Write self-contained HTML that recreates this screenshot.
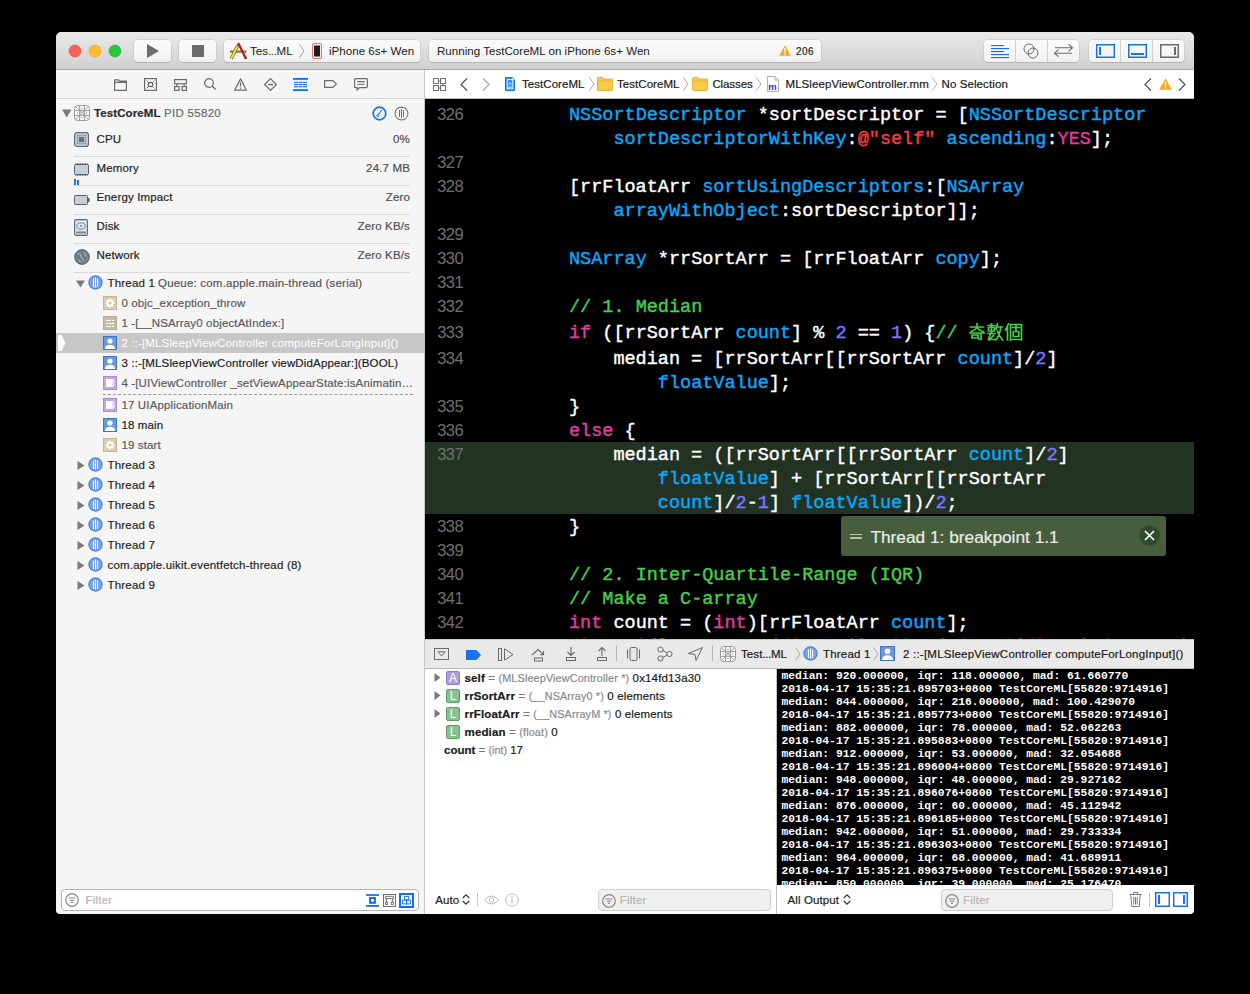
<!DOCTYPE html>
<html><head><meta charset="utf-8">
<style>
*{margin:0;padding:0;box-sizing:border-box}
html,body{width:1250px;height:994px;background:#000;overflow:hidden}
body{position:relative;font-family:"Liberation Sans",sans-serif;font-size:11.5px;color:#262626}
.a{position:absolute}
.t{position:absolute;white-space:pre;line-height:1;-webkit-text-stroke:0.2px currentColor}
.mono{font-family:"Liberation Mono",monospace}
svg{position:absolute;overflow:visible}
#win{position:absolute;left:56px;top:32px;width:1138px;height:882px;border-radius:5px;overflow:hidden;background:#f5f5f5}
#toolbar{left:56px;top:32px;width:1138px;height:38px;background:linear-gradient(#e9e9e9,#d0d0d0);border-bottom:1px solid #a7a7a7;border-radius:5px 5px 0 0}
.btn{position:absolute;height:22px;top:40px;background:linear-gradient(#fbfbfb,#f1f1f1);border-radius:4px;box-shadow:0 0 0 0.5px #c0c0c0,0 1px 0 #a9a9a9}
.code{position:absolute;font-family:"Liberation Mono",monospace;font-size:18.5px;color:#fff;-webkit-text-stroke:0.4px currentColor;white-space:pre;line-height:24px}
.ln{position:absolute;font-family:"Liberation Sans",sans-serif;font-size:16.5px;color:#6f6f6f;white-space:pre;line-height:1;letter-spacing:-0.6px}
.k{color:#e03ca4}.c{color:#06aaff}.s{color:#ff3b40}.n{color:#8174ff}.g{color:#45cf49}
.con{position:absolute;font-family:"Liberation Mono",monospace;font-weight:700;font-size:11.33px;color:#fff;white-space:pre;line-height:1}
</style></head><body>

<div id="clip" style="position:absolute;left:0;top:0;width:1250px;height:994px;clip-path:inset(32px 56px 80px 56px round 5px 5px 4px 4px)">
<div id="win"></div>
<div class="a" id="toolbar"></div>
<svg style="left:68px;top:44px" width="14" height="14" viewBox="0 0 14 14"><circle cx="7" cy="7" r="6" fill="#fe5f57" stroke="#e2463f" stroke-width="0.6"/></svg>
<svg style="left:88px;top:44px" width="14" height="14" viewBox="0 0 14 14"><circle cx="7" cy="7" r="6" fill="#febc2e" stroke="#e1a116" stroke-width="0.6"/></svg>
<svg style="left:108px;top:44px" width="14" height="14" viewBox="0 0 14 14"><circle cx="7" cy="7" r="6" fill="#28c840" stroke="#12ac28" stroke-width="0.6"/></svg>
<div class="btn" style="left:134px;width:37px"></div>
<svg style="left:146px;top:44px" width="14" height="14" viewBox="0 0 14 14"><path d="M1 0 L13 7 L1 14 Z" fill="#6b6b6b"/></svg>
<div class="btn" style="left:179px;width:37px"></div>
<svg style="left:192px;top:45px" width="12" height="12" viewBox="0 0 12 12"><rect x="0" y="0" width="12" height="12" fill="#6b6b6b"/></svg>
<div class="btn" style="left:224px;width:196px"></div>
<svg style="left:228px;top:42px" width="20" height="18" viewBox="0 0 20 18"><path d="M2 9.6 H18.5" stroke="#9a7448" stroke-width="2.4"/><path d="M3.2 16.8 L9.3 4.2" stroke="#6b5a2a" stroke-width="3.2"/><path d="M3.2 16.8 L9.3 4.2" stroke="#f2dc3c" stroke-width="2"/><path d="M9.3 4.2 L10.2 2.4" stroke="#e2506a" stroke-width="2.4"/><path d="M10.2 1 L18 16.8" stroke="#b01c2a" stroke-width="2.2"/><path d="M17 14.5 L18.2 17" stroke="#6a4a2a" stroke-width="2"/></svg>
<div class="t" style="left:250px;top:45.00px;font-size:11.6px;color:#1a1a1a;font-weight:400;letter-spacing:0px;-webkit-text-stroke:0">Tes<span style="letter-spacing:-0.4px">...</span>ML</div>
<svg style="left:299px;top:44px" width="6" height="14" viewBox="0 0 6 14"><path d="M0.5 0.5 L5 7 L0.5 13.5" stroke="#9a9a9a" stroke-width="0.9" fill="none"/></svg>
<svg style="left:312px;top:43px" width="10" height="16" viewBox="0 0 10 16"><rect x="0.5" y="0.5" width="9" height="15" rx="1.5" fill="#f6eeee" stroke="#d47a6a"/><rect x="2" y="2.5" width="6" height="11" fill="#1c1c1c"/></svg>
<div class="t" style="left:329px;top:45.00px;font-size:11.6px;color:#1a1a1a;font-weight:400;letter-spacing:0px;-webkit-text-stroke:0">iPhone 6s+ Wen</div>
<div class="btn" style="left:429px;width:392px"></div>
<div class="t" style="left:437px;top:45.00px;font-size:11.6px;color:#1a1a1a;font-weight:400;letter-spacing:0px;-webkit-text-stroke:0">Running TestCoreML on iPhone 6s+ Wen</div>
<svg style="left:779px;top:45px" width="12" height="11" viewBox="0 0 12 11"><path d="M6 0.3 L11.8 10.7 H0.2 Z" fill="#f5a623"/><rect x="5.3" y="3" width="1.4" height="4.6" fill="#fff"/><rect x="5.3" y="8.4" width="1.4" height="1.4" fill="#fff"/></svg>
<div class="t" style="left:796px;top:47.00px;font-size:10px;color:#2a2a2a;font-weight:400;letter-spacing:0.5px;">206</div>
<div class="btn" style="left:984px;width:95px"></div>
<div class="a" style="left:1015px;top:40px;width:1px;height:22px;background:#d0d0d0"></div>
<div class="a" style="left:1047px;top:40px;width:1px;height:22px;background:#d0d0d0"></div>
<svg style="left:991px;top:45px" width="18" height="14" viewBox="0 0 18 14"><rect x="0" y="0" width="13" height="1.1" fill="#0d6ef5"/><rect x="0" y="3" width="18" height="1.1" fill="#0d6ef5"/><rect x="0" y="6" width="13" height="1.1" fill="#0d6ef5"/><rect x="0" y="9" width="18" height="1.1" fill="#0d6ef5"/><rect x="0" y="12" width="18" height="1.1" fill="#0d6ef5"/></svg>
<svg style="left:1023px;top:43px" width="16" height="16" viewBox="0 0 16 16"><circle cx="6" cy="6" r="5" fill="none" stroke="#6b6b6b" stroke-width="1"/><circle cx="10" cy="10" r="5" fill="none" stroke="#6b6b6b" stroke-width="1"/></svg>
<svg style="left:1053px;top:43px" width="21" height="15" viewBox="0 0 21 15"><path d="M2 4.8 H19.5 M15.5 1.3 L19.5 4.8 L15.5 8.3 M19 10.2 H1.5 M5.5 6.7 L1.5 10.2 L5.5 13.7" stroke="#6b6b6b" stroke-width="1.1" fill="none"/></svg>
<div class="btn" style="left:1089px;width:95px"></div>
<div class="a" style="left:1120px;top:40px;width:1px;height:22px;background:#d0d0d0"></div>
<div class="a" style="left:1152px;top:40px;width:1px;height:22px;background:#d0d0d0"></div>
<svg style="left:1096px;top:44px" width="19" height="14" viewBox="0 0 19 14"><rect x="0.75" y="0.75" width="17.5" height="12.5" fill="none" stroke="#1a73e8" stroke-width="1.5"/><rect x="3" y="3" width="2" height="8" fill="#1a73e8"/></svg>
<svg style="left:1128px;top:44px" width="19" height="14" viewBox="0 0 19 14"><rect x="0.75" y="0.75" width="17.5" height="12.5" fill="none" stroke="#1a73e8" stroke-width="1.5"/><rect x="3" y="9" width="13" height="2" fill="#1a73e8"/></svg>
<svg style="left:1160px;top:44px" width="19" height="14" viewBox="0 0 19 14"><rect x="0.75" y="0.75" width="17.5" height="12.5" fill="none" stroke="#6b6b6b" stroke-width="1.5"/><rect x="14" y="3" width="2" height="8" fill="#6b6b6b"/></svg>
<div class="a" style="left:56px;top:70px;width:368px;height:844px;background:#f5f5f5"></div>
<div class="a" style="left:56px;top:98px;width:368px;height:1px;background:#d6d6d6"></div>
<div class="a" style="left:424px;top:70px;width:1px;height:844px;background:#c8c8c8"></div>
<svg style="left:114px;top:79px" width="13" height="12" viewBox="0 0 13 12"><path d="M0.6 11.4 V0.9 H4.6 L5.6 2.1 H12.4 V11.4 Z M0.6 3.4 H12.4" fill="none" stroke="#6b6b6b" stroke-width="1.2" stroke-linejoin="round"/></svg>
<svg style="left:144px;top:78px" width="13" height="13" viewBox="0 0 13 13"><rect x="0.6" y="0.6" width="11.8" height="11.8" fill="none" stroke="#6b6b6b" stroke-width="1.2"/><path d="M2.6 2.6 L10.4 10.4 M10.4 2.6 L2.6 10.4" stroke="#6b6b6b" stroke-width="0.9"/><circle cx="6.5" cy="6.5" r="2.2" fill="#f5f5f5" stroke="#6b6b6b" stroke-width="1.2"/></svg>
<svg style="left:174px;top:79px" width="13" height="12" viewBox="0 0 13 12"><rect x="0.6" y="0.6" width="11.8" height="4.2" fill="none" stroke="#6b6b6b" stroke-width="1.2"/><path d="M2.8 4.8 V7.4 M10.2 4.8 V7.4" stroke="#6b6b6b" stroke-width="1.2"/><rect x="0.6" y="7.6" width="4.4" height="3.8" fill="none" stroke="#6b6b6b" stroke-width="1.2"/><rect x="8" y="7.6" width="4.4" height="3.8" fill="none" stroke="#6b6b6b" stroke-width="1.2"/></svg>
<svg style="left:204px;top:78px" width="12" height="12" viewBox="0 0 12 12"><circle cx="5" cy="5" r="4.3" fill="none" stroke="#6b6b6b" stroke-width="1.2"/><path d="M8.1 8.1 L11.6 11.6" stroke="#6b6b6b" stroke-width="1.4"/></svg>
<svg style="left:234px;top:78px" width="13" height="13" viewBox="0 0 13 13"><path d="M6.5 0.9 L12.4 12.2 H0.6 Z" fill="none" stroke="#6b6b6b" stroke-width="1.2" stroke-linejoin="round"/><path d="M6.5 4.6 V8.6" stroke="#6b6b6b" stroke-width="1.2"/><rect x="5.9" y="9.6" width="1.2" height="1.2" fill="#6b6b6b"/></svg>
<svg style="left:264px;top:78px" width="13" height="13" viewBox="0 0 13 13"><path d="M6.5 0.7 L12.3 6.5 L6.5 12.3 L0.7 6.5 Z" fill="none" stroke="#6b6b6b" stroke-width="1.2" stroke-linejoin="round"/><path d="M4 6.5 H9" stroke="#6b6b6b" stroke-width="1.4"/></svg>
<svg style="left:293px;top:78px" width="15" height="13" viewBox="0 0 15 13"><rect x="0" y="0" width="15" height="1.8" fill="#0d6ef5"/><rect x="0" y="11.2" width="15" height="1.8" fill="#0d6ef5"/><rect x="1" y="3.8" width="4" height="1.1" fill="#0d6ef5"/><rect x="1" y="6" width="4" height="1.1" fill="#0d6ef5"/><rect x="1" y="8.2" width="4" height="1.1" fill="#0d6ef5"/><rect x="5.5" y="3.8" width="4" height="1.1" fill="#0d6ef5"/><rect x="5.5" y="6" width="4" height="1.1" fill="#0d6ef5"/><rect x="5.5" y="8.2" width="4" height="1.1" fill="#0d6ef5"/><rect x="10" y="3.8" width="4" height="1.1" fill="#0d6ef5"/><rect x="10" y="6" width="4" height="1.1" fill="#0d6ef5"/><rect x="10" y="8.2" width="4" height="1.1" fill="#0d6ef5"/></svg>
<svg style="left:324px;top:80px" width="13" height="8" viewBox="0 0 13 8"><path d="M0.6 0.6 H9 L12.3 4 L9 7.4 H0.6 Z" fill="none" stroke="#6b6b6b" stroke-width="1.2" stroke-linejoin="round"/></svg>
<svg style="left:354px;top:78px" width="14" height="13" viewBox="0 0 14 13"><path d="M1.6 0.6 H12.4 Q13.4 0.6 13.4 1.6 V8.6 Q13.4 9.6 12.4 9.6 H5.5 L3.2 11.8 V9.6 H1.6 Q0.6 9.6 0.6 8.6 V1.6 Q0.6 0.6 1.6 0.6 Z" fill="none" stroke="#6b6b6b" stroke-width="1.2"/><path d="M3.2 3.6 H10.8 M3.2 6.2 H10.8" stroke="#6b6b6b" stroke-width="1.1"/></svg>
<svg style="left:62px;top:109px" width="10" height="9" viewBox="0 0 10 9"><path d="M0 0.5 H9.5 L4.75 8.5 Z" fill="#7a7a7a"/></svg>
<svg style="left:74px;top:105px" width="16" height="16" viewBox="0 0 16 16"><rect x="0.5" y="0.5" width="15" height="15" rx="3.2" fill="#fcfcfc" stroke="#9a9a9a"/><path d="M5.5 0.5 V15.5 M10.5 0.5 V15.5 M0.5 5.5 H15.5 M0.5 10.5 H15.5 M1.5 1.5 L5.5 5.5 M14.5 1.5 L10.5 5.5 M1.5 14.5 L5.5 10.5 M14.5 14.5 L10.5 10.5" stroke="#9a9a9a" stroke-width="0.9"/><circle cx="8" cy="8" r="4.6" fill="none" stroke="#a8a8a8" stroke-width="0.7"/><circle cx="8" cy="8" r="2.2" fill="#fcfcfc" stroke="#9a9a9a" stroke-width="0.9"/><circle cx="8" cy="8" r="0.9" fill="#9a9a9a"/></svg>
<div class="t" style="left:94px;top:108.00px;font-size:11.5px;color:#2b2b2b;font-weight:700;letter-spacing:0.1px;">TestCoreML</div>
<div class="t" style="left:164px;top:108.00px;font-size:11.5px;color:#6b6b6b;font-weight:400;letter-spacing:0.3px;">PID 55820</div>
<svg style="left:372px;top:106px" width="15" height="15" viewBox="0 0 15 15"><circle cx="7.5" cy="7.5" r="6.3" fill="none" stroke="#1a73e8" stroke-width="1.7"/><path d="M6 9 L9.8 4" stroke="#1a73e8" stroke-width="1.1"/><circle cx="5.8" cy="9.6" r="1.1" fill="none" stroke="#1a73e8" stroke-width="0.9"/></svg>
<svg style="left:394px;top:106px" width="15" height="15" viewBox="0 0 15 15"><circle cx="7.5" cy="7.5" r="6.4" fill="none" stroke="#7a7a7a" stroke-width="1.1"/><path d="M5.5 4 V11 M7.5 3 V12 M9.5 4 V11" stroke="#6e6e6e" stroke-width="1"/></svg>
<div class="t" style="left:96.5px;top:134.00px;font-size:11.5px;color:#1e1e1e;font-weight:400;letter-spacing:0.15px;">CPU</div>
<div class="t" style="right:840px;top:134px;font-size:11.5px;color:#505050;letter-spacing:0.15px">0%</div>
<div class="a" style="left:74px;top:156px;width:336px;height:1px;background:#d9d9d9"></div>
<div class="t" style="left:96.5px;top:163.00px;font-size:11.5px;color:#1e1e1e;font-weight:400;letter-spacing:0.15px;">Memory</div>
<div class="t" style="right:840px;top:163px;font-size:11.5px;color:#505050;letter-spacing:0.15px">24.7 MB</div>
<div class="a" style="left:74px;top:185px;width:336px;height:1px;background:#d9d9d9"></div>
<div class="t" style="left:96.5px;top:192.00px;font-size:11.5px;color:#1e1e1e;font-weight:400;letter-spacing:0.15px;">Energy Impact</div>
<div class="t" style="right:840px;top:192px;font-size:11.5px;color:#505050;letter-spacing:0.15px">Zero</div>
<div class="a" style="left:74px;top:214px;width:336px;height:1px;background:#d9d9d9"></div>
<div class="t" style="left:96.5px;top:221.00px;font-size:11.5px;color:#1e1e1e;font-weight:400;letter-spacing:0.15px;">Disk</div>
<div class="t" style="right:840px;top:221px;font-size:11.5px;color:#505050;letter-spacing:0.15px">Zero KB/s</div>
<div class="a" style="left:74px;top:243px;width:336px;height:1px;background:#d9d9d9"></div>
<div class="t" style="left:96.5px;top:250.00px;font-size:11.5px;color:#1e1e1e;font-weight:400;letter-spacing:0.15px;">Network</div>
<div class="t" style="right:840px;top:250px;font-size:11.5px;color:#505050;letter-spacing:0.15px">Zero KB/s</div>
<div class="a" style="left:74px;top:272px;width:336px;height:1px;background:#d9d9d9"></div>
<svg style="left:74px;top:132px" width="15" height="15" viewBox="0 0 15 15"><rect x="0.6" y="0.6" width="13.8" height="13.8" rx="2.5" fill="#dfe3ea" stroke="#5c6470" stroke-width="1.2"/><rect x="3" y="3" width="9" height="9" fill="#b8c0cc" stroke="#6c7480" stroke-width="0.7"/><rect x="5" y="5" width="5" height="5" fill="#66707c"/></svg>
<svg style="left:74px;top:163px" width="15" height="13" viewBox="0 0 15 13"><rect x="0.5" y="1.5" width="14" height="10" rx="1" fill="#c9ced6" stroke="#555d68"/><rect x="1.5" y="0" width="0.8" height="1.5" fill="#555d68"/><rect x="1.5" y="11.5" width="0.8" height="1.5" fill="#555d68"/><rect x="3.1" y="0" width="0.8" height="1.5" fill="#555d68"/><rect x="3.1" y="11.5" width="0.8" height="1.5" fill="#555d68"/><rect x="4.7" y="0" width="0.8" height="1.5" fill="#555d68"/><rect x="4.7" y="11.5" width="0.8" height="1.5" fill="#555d68"/><rect x="6.3" y="0" width="0.8" height="1.5" fill="#555d68"/><rect x="6.3" y="11.5" width="0.8" height="1.5" fill="#555d68"/><rect x="7.9" y="0" width="0.8" height="1.5" fill="#555d68"/><rect x="7.9" y="11.5" width="0.8" height="1.5" fill="#555d68"/><rect x="9.5" y="0" width="0.8" height="1.5" fill="#555d68"/><rect x="9.5" y="11.5" width="0.8" height="1.5" fill="#555d68"/><rect x="11.1" y="0" width="0.8" height="1.5" fill="#555d68"/><rect x="11.1" y="11.5" width="0.8" height="1.5" fill="#555d68"/><rect x="12.7" y="0" width="0.8" height="1.5" fill="#555d68"/><rect x="12.7" y="11.5" width="0.8" height="1.5" fill="#555d68"/></svg>
<div class="a" style="left:74px;top:179px;width:2px;height:6px;background:#1a73e8"></div>
<div class="a" style="left:77px;top:180px;width:2px;height:5px;background:#1a73e8"></div>
<svg style="left:74px;top:195px" width="16" height="10" viewBox="0 0 16 10"><rect x="0.5" y="0.5" width="13" height="9" rx="1" fill="#c9ced6" stroke="#555d68"/><rect x="14" y="3" width="1.5" height="4" fill="#555d68"/></svg>
<svg style="left:74px;top:219px" width="14" height="17" viewBox="0 0 14 17"><rect x="0.6" y="0.6" width="12.8" height="15.8" rx="1.5" fill="#dfe3ea" stroke="#5c6470" stroke-width="1.1"/><ellipse cx="7" cy="7" rx="4.2" ry="3.2" fill="none" stroke="#7c8490"/><circle cx="7" cy="7" r="1" fill="#7c8490"/><rect x="2" y="12.5" width="10" height="2" fill="#7c8490"/></svg>
<svg style="left:74px;top:249px" width="16" height="16" viewBox="0 0 16 16"><circle cx="8" cy="8" r="7.4" fill="#6f7883" stroke="#505862" stroke-width="0.8"/><circle cx="8" cy="8" r="5.6" fill="none" stroke="#8c949e" stroke-width="0.6"/><path d="M4 5 Q6 4 7 6 Q6 8 8 9 Q10 10 9 12 M10 3.5 Q11.5 5 12 7.5 M5 10.5 Q6 12 6.5 13" stroke="#bfc5cc" stroke-width="0.9" fill="none"/></svg>
<svg style="left:76px;top:280px" width="9" height="8" viewBox="0 0 9 8"><path d="M0 0.5 H9 L4.5 7.5 Z" fill="#7a7a7a"/></svg>
<svg style="left:88px;top:275px" width="15" height="15" viewBox="0 0 15 15"><circle cx="7.5" cy="7.5" r="7.2" fill="#4f84d6"/><circle cx="7.5" cy="7.5" r="5.9" fill="#7ba4e0"/><path d="M5.5 3.6 V12 M7.5 2.6 V12.6 M9.5 3.6 V12" stroke="#fff" stroke-width="1"/></svg>
<div class="t" style="left:107.5px;top:278.00px;font-size:11.5px;color:#262626;font-weight:400;letter-spacing:0.2px;">Thread 1</div>
<div class="t" style="left:158px;top:278.00px;font-size:11.5px;color:#555555;font-weight:400;letter-spacing:0.2px;">Queue: com.apple.main-thread (serial)</div>
<div class="a" style="left:56px;top:333px;width:368px;height:20px;background:#c7c7c7"></div>
<svg style="left:58px;top:335px" width="8" height="16" viewBox="0 0 8 16"><path d="M0 0 H3.5 L7.5 8 L3.5 16 H0 Z" fill="#fff"/></svg>
<svg style="left:103px;top:296px" width="14" height="14" viewBox="0 0 14 14"><rect x="0" y="0" width="14" height="14" fill="#dccfb2"/><rect x="0.5" y="0.5" width="13" height="13" fill="none" stroke="#c8b48e"/><circle cx="7" cy="7" r="5.2" fill="none" stroke="#cdbd9c" stroke-width="0.6"/><circle cx="7" cy="7" r="3.4" fill="#fff"/><rect x="6.2" y="2.5" width="1.6" height="1.6" fill="#fff" transform="rotate(0 7 7)"/><rect x="6.2" y="2.5" width="1.6" height="1.6" fill="#fff" transform="rotate(45 7 7)"/><rect x="6.2" y="2.5" width="1.6" height="1.6" fill="#fff" transform="rotate(90 7 7)"/><rect x="6.2" y="2.5" width="1.6" height="1.6" fill="#fff" transform="rotate(135 7 7)"/><rect x="6.2" y="2.5" width="1.6" height="1.6" fill="#fff" transform="rotate(180 7 7)"/><rect x="6.2" y="2.5" width="1.6" height="1.6" fill="#fff" transform="rotate(225 7 7)"/><rect x="6.2" y="2.5" width="1.6" height="1.6" fill="#fff" transform="rotate(270 7 7)"/><rect x="6.2" y="2.5" width="1.6" height="1.6" fill="#fff" transform="rotate(315 7 7)"/><circle cx="7" cy="7" r="1.5" fill="#d2c3a3"/></svg>
<div class="t" style="left:121.4px;top:298.00px;font-size:11.5px;color:#5c5c5c;font-weight:400;letter-spacing:0.15px;">0 objc_exception_throw</div>
<svg style="left:103px;top:316px" width="14" height="14" viewBox="0 0 14 14"><rect x="0" y="0" width="14" height="14" fill="#c6c2a8"/><rect x="0.5" y="0.5" width="13" height="13" fill="none" stroke="#b3ae92"/><rect x="2" y="2" width="10" height="10" fill="none" stroke="#b8b398" stroke-width="0.6"/><path d="M3 4.5 H8 M9 4.5 H11 M3 7.5 H4.5 M5.5 7.5 H11 M3 10.5 H8 M9 10.5 H11" stroke="#fff" stroke-width="1.1"/></svg>
<div class="t" style="left:121.4px;top:318.00px;font-size:11.5px;color:#5c5c5c;font-weight:400;letter-spacing:0.15px;">1 -[__NSArray0 objectAtIndex:]</div>
<svg style="left:103px;top:336px" width="14" height="14" viewBox="0 0 14 14"><rect x="0" y="0" width="14" height="14" fill="#6a98d8"/><rect x="0.5" y="0.5" width="13" height="13" fill="none" stroke="#3f76c4"/><circle cx="7" cy="5" r="2.6" fill="#fff"/><path d="M2 13 Q2 8.8 7 8.8 Q12 8.8 12 13 Z" fill="#fff"/></svg>
<div class="t" style="left:121.4px;top:338.00px;font-size:11.5px;color:#ffffff;font-weight:400;letter-spacing:0.15px;-webkit-text-stroke:0">2 ::-[MLSleepViewController computeForLongInput]()</div>
<svg style="left:103px;top:356px" width="14" height="14" viewBox="0 0 14 14"><rect x="0" y="0" width="14" height="14" fill="#6a98d8"/><rect x="0.5" y="0.5" width="13" height="13" fill="none" stroke="#3f76c4"/><circle cx="7" cy="5" r="2.6" fill="#fff"/><path d="M2 13 Q2 8.8 7 8.8 Q12 8.8 12 13 Z" fill="#fff"/></svg>
<div class="t" style="left:121.4px;top:358.00px;font-size:11.5px;color:#1e1e1e;font-weight:400;letter-spacing:0.15px;">3 ::-[MLSleepViewController viewDidAppear:](BOOL)</div>
<svg style="left:103px;top:376px" width="14" height="14" viewBox="0 0 14 14"><rect x="0" y="0" width="14" height="14" fill="#c3a8e0"/><rect x="0.5" y="0.5" width="13" height="13" fill="none" stroke="#a98bd0"/><path d="M3 3 H9 Q11.5 3 11.5 7 Q11.5 11 9 11 H3 Z" fill="#fff"/><path d="M9 4.5 L10.5 7 L9 9.5" fill="none" stroke="#c3a8e0" stroke-width="0.8"/></svg>
<div class="t" style="left:121.4px;top:378.00px;font-size:11.5px;color:#5c5c5c;font-weight:400;letter-spacing:0.15px;">4 -[UIViewController _setViewAppearState:isAnimatin…</div>
<svg style="left:103px;top:398px" width="14" height="14" viewBox="0 0 14 14"><rect x="0" y="0" width="14" height="14" fill="#c3a8e0"/><rect x="0.5" y="0.5" width="13" height="13" fill="none" stroke="#a98bd0"/><path d="M3 3 H9 Q11.5 3 11.5 7 Q11.5 11 9 11 H3 Z" fill="#fff"/><path d="M9 4.5 L10.5 7 L9 9.5" fill="none" stroke="#c3a8e0" stroke-width="0.8"/></svg>
<div class="t" style="left:121.4px;top:400.00px;font-size:11.5px;color:#5c5c5c;font-weight:400;letter-spacing:0.15px;">17 UIApplicationMain</div>
<svg style="left:103px;top:418px" width="14" height="14" viewBox="0 0 14 14"><rect x="0" y="0" width="14" height="14" fill="#6a98d8"/><rect x="0.5" y="0.5" width="13" height="13" fill="none" stroke="#3f76c4"/><circle cx="7" cy="5" r="2.6" fill="#fff"/><path d="M2 13 Q2 8.8 7 8.8 Q12 8.8 12 13 Z" fill="#fff"/></svg>
<div class="t" style="left:121.4px;top:420.00px;font-size:11.5px;color:#1e1e1e;font-weight:400;letter-spacing:0.15px;">18 main</div>
<svg style="left:103px;top:438px" width="14" height="14" viewBox="0 0 14 14"><rect x="0" y="0" width="14" height="14" fill="#dccfb2"/><rect x="0.5" y="0.5" width="13" height="13" fill="none" stroke="#c8b48e"/><circle cx="7" cy="7" r="5.2" fill="none" stroke="#cdbd9c" stroke-width="0.6"/><circle cx="7" cy="7" r="3.4" fill="#fff"/><rect x="6.2" y="2.5" width="1.6" height="1.6" fill="#fff" transform="rotate(0 7 7)"/><rect x="6.2" y="2.5" width="1.6" height="1.6" fill="#fff" transform="rotate(45 7 7)"/><rect x="6.2" y="2.5" width="1.6" height="1.6" fill="#fff" transform="rotate(90 7 7)"/><rect x="6.2" y="2.5" width="1.6" height="1.6" fill="#fff" transform="rotate(135 7 7)"/><rect x="6.2" y="2.5" width="1.6" height="1.6" fill="#fff" transform="rotate(180 7 7)"/><rect x="6.2" y="2.5" width="1.6" height="1.6" fill="#fff" transform="rotate(225 7 7)"/><rect x="6.2" y="2.5" width="1.6" height="1.6" fill="#fff" transform="rotate(270 7 7)"/><rect x="6.2" y="2.5" width="1.6" height="1.6" fill="#fff" transform="rotate(315 7 7)"/><circle cx="7" cy="7" r="1.5" fill="#d2c3a3"/></svg>
<div class="t" style="left:121.4px;top:440.00px;font-size:11.5px;color:#5c5c5c;font-weight:400;letter-spacing:0.15px;">19 start</div>
<div class="a" style="left:103px;top:394px;width:310px;height:0;border-top:1px dashed #9a9a9a"></div>
<svg style="left:77px;top:461px" width="8" height="9" viewBox="0 0 8 9"><path d="M0.5 0 L7.5 4.5 L0.5 9 Z" fill="#7a7a7a"/></svg>
<svg style="left:88px;top:457px" width="15" height="15" viewBox="0 0 15 15"><circle cx="7.5" cy="7.5" r="7.2" fill="#4f84d6"/><circle cx="7.5" cy="7.5" r="5.9" fill="#7ba4e0"/><path d="M5.5 3.6 V12 M7.5 2.6 V12.6 M9.5 3.6 V12" stroke="#fff" stroke-width="1"/></svg>
<div class="t" style="left:107.5px;top:460.00px;font-size:11.5px;color:#262626;font-weight:400;letter-spacing:0.2px;">Thread 3</div>
<svg style="left:77px;top:481px" width="8" height="9" viewBox="0 0 8 9"><path d="M0.5 0 L7.5 4.5 L0.5 9 Z" fill="#7a7a7a"/></svg>
<svg style="left:88px;top:477px" width="15" height="15" viewBox="0 0 15 15"><circle cx="7.5" cy="7.5" r="7.2" fill="#4f84d6"/><circle cx="7.5" cy="7.5" r="5.9" fill="#7ba4e0"/><path d="M5.5 3.6 V12 M7.5 2.6 V12.6 M9.5 3.6 V12" stroke="#fff" stroke-width="1"/></svg>
<div class="t" style="left:107.5px;top:480.00px;font-size:11.5px;color:#262626;font-weight:400;letter-spacing:0.2px;">Thread 4</div>
<svg style="left:77px;top:501px" width="8" height="9" viewBox="0 0 8 9"><path d="M0.5 0 L7.5 4.5 L0.5 9 Z" fill="#7a7a7a"/></svg>
<svg style="left:88px;top:497px" width="15" height="15" viewBox="0 0 15 15"><circle cx="7.5" cy="7.5" r="7.2" fill="#4f84d6"/><circle cx="7.5" cy="7.5" r="5.9" fill="#7ba4e0"/><path d="M5.5 3.6 V12 M7.5 2.6 V12.6 M9.5 3.6 V12" stroke="#fff" stroke-width="1"/></svg>
<div class="t" style="left:107.5px;top:500.00px;font-size:11.5px;color:#262626;font-weight:400;letter-spacing:0.2px;">Thread 5</div>
<svg style="left:77px;top:521px" width="8" height="9" viewBox="0 0 8 9"><path d="M0.5 0 L7.5 4.5 L0.5 9 Z" fill="#7a7a7a"/></svg>
<svg style="left:88px;top:517px" width="15" height="15" viewBox="0 0 15 15"><circle cx="7.5" cy="7.5" r="7.2" fill="#4f84d6"/><circle cx="7.5" cy="7.5" r="5.9" fill="#7ba4e0"/><path d="M5.5 3.6 V12 M7.5 2.6 V12.6 M9.5 3.6 V12" stroke="#fff" stroke-width="1"/></svg>
<div class="t" style="left:107.5px;top:520.00px;font-size:11.5px;color:#262626;font-weight:400;letter-spacing:0.2px;">Thread 6</div>
<svg style="left:77px;top:541px" width="8" height="9" viewBox="0 0 8 9"><path d="M0.5 0 L7.5 4.5 L0.5 9 Z" fill="#7a7a7a"/></svg>
<svg style="left:88px;top:537px" width="15" height="15" viewBox="0 0 15 15"><circle cx="7.5" cy="7.5" r="7.2" fill="#4f84d6"/><circle cx="7.5" cy="7.5" r="5.9" fill="#7ba4e0"/><path d="M5.5 3.6 V12 M7.5 2.6 V12.6 M9.5 3.6 V12" stroke="#fff" stroke-width="1"/></svg>
<div class="t" style="left:107.5px;top:540.00px;font-size:11.5px;color:#262626;font-weight:400;letter-spacing:0.2px;">Thread 7</div>
<svg style="left:77px;top:561px" width="8" height="9" viewBox="0 0 8 9"><path d="M0.5 0 L7.5 4.5 L0.5 9 Z" fill="#7a7a7a"/></svg>
<svg style="left:88px;top:557px" width="15" height="15" viewBox="0 0 15 15"><circle cx="7.5" cy="7.5" r="7.2" fill="#4f84d6"/><circle cx="7.5" cy="7.5" r="5.9" fill="#7ba4e0"/><path d="M5.5 3.6 V12 M7.5 2.6 V12.6 M9.5 3.6 V12" stroke="#fff" stroke-width="1"/></svg>
<div class="t" style="left:107.5px;top:560.00px;font-size:11.5px;color:#262626;font-weight:400;letter-spacing:0.2px;">com.apple.uikit.eventfetch-thread (8)</div>
<svg style="left:77px;top:581px" width="8" height="9" viewBox="0 0 8 9"><path d="M0.5 0 L7.5 4.5 L0.5 9 Z" fill="#7a7a7a"/></svg>
<svg style="left:88px;top:577px" width="15" height="15" viewBox="0 0 15 15"><circle cx="7.5" cy="7.5" r="7.2" fill="#4f84d6"/><circle cx="7.5" cy="7.5" r="5.9" fill="#7ba4e0"/><path d="M5.5 3.6 V12 M7.5 2.6 V12.6 M9.5 3.6 V12" stroke="#fff" stroke-width="1"/></svg>
<div class="t" style="left:107.5px;top:580.00px;font-size:11.5px;color:#262626;font-weight:400;letter-spacing:0.2px;">Thread 9</div>
<div class="a" style="left:61px;top:889px;width:358px;height:22px;background:#fff;border:1px solid #b3b3b3;border-radius:4px"></div>
<svg style="left:65px;top:893px" width="14" height="14" viewBox="0 0 14 14"><circle cx="7" cy="7" r="6.3" fill="none" stroke="#8a8a8a" stroke-width="1.2"/><path d="M3.5 5 H10.5 M4.8 7.2 H9.2 M6 9.4 H8" stroke="#8a8a8a" stroke-width="1.1"/></svg>
<div class="t" style="left:85.5px;top:895.00px;font-size:11.5px;color:#b4b4b4;font-weight:400;letter-spacing:0.2px;">Filter</div>
<svg style="left:366px;top:894px" width="13" height="13" viewBox="0 0 13 13"><rect x="0" y="0.2" width="13" height="1.7" fill="#0d6ef5"/><rect x="0" y="11" width="13" height="1.8" fill="#0d6ef5"/><rect x="4.1" y="4" width="4.8" height="4.8" fill="none" stroke="#0d6ef5" stroke-width="2"/></svg>
<svg style="left:383px;top:894px" width="13" height="13" viewBox="0 0 13 13"><rect x="0.5" y="0.5" width="12" height="12" fill="none" stroke="#6e6e6e"/><rect x="2.7" y="2.3" width="7.6" height="2.2" fill="none" stroke="#6e6e6e" stroke-width="0.9"/><path d="M3.5 4.5 V8 M9.5 4.5 V8" stroke="#6e6e6e" stroke-width="0.9"/><rect x="2.5" y="8.2" width="2.2" height="2.2" fill="none" stroke="#6e6e6e" stroke-width="0.9"/><rect x="8.3" y="8.2" width="2.2" height="2.2" fill="none" stroke="#6e6e6e" stroke-width="0.9"/></svg>
<svg style="left:399px;top:893px" width="15" height="15" viewBox="0 0 15 15"><rect x="1" y="1" width="13" height="13" fill="none" stroke="#0d6ef5" stroke-width="2"/><rect x="5.6" y="3.4" width="3.8" height="3.6" fill="none" stroke="#0d6ef5" stroke-width="0.9"/><rect x="3.6" y="7" width="3.9" height="3.9" fill="none" stroke="#0d6ef5" stroke-width="0.9"/><rect x="7.5" y="7" width="3.9" height="3.9" fill="none" stroke="#0d6ef5" stroke-width="0.9"/></svg>
<div class="a" style="left:425px;top:70px;width:769px;height:28px;background:#ffffff"></div>
<div class="a" style="left:425px;top:98px;width:769px;height:1px;background:#bdbdbd"></div>
<svg style="left:433px;top:78px" width="13" height="13" viewBox="0 0 13 13"><rect x="0.5" y="0.5" width="5" height="5" fill="none" stroke="#707070"/><rect x="7.5" y="0.5" width="5" height="5" fill="none" stroke="#707070"/><rect x="0.5" y="7.5" width="5" height="5" fill="none" stroke="#707070"/><rect x="7.5" y="7.5" width="5" height="5" fill="none" stroke="#707070"/><path d="M5.5 3 H8.5 M10 5.5 V8.5 M5.5 10 H8.5" stroke="#707070" stroke-width="0.9"/></svg>
<svg style="left:460px;top:78px" width="8" height="13" viewBox="0 0 8 13"><path d="M7 0.5 L1 6.5 L7 12.5" fill="none" stroke="#555" stroke-width="1.3"/></svg>
<svg style="left:482px;top:78px" width="8" height="13" viewBox="0 0 8 13"><path d="M1 0.5 L7 6.5 L1 12.5" fill="none" stroke="#aaa" stroke-width="1.3"/></svg>
<svg style="left:505px;top:77px" width="10" height="14" viewBox="0 0 10 14"><path d="M0.5 0.5 H7.2 L9.5 2.8 V13.5 H0.5 Z" fill="#3592f0" stroke="#1c6fdc"/><path d="M7.2 0.5 V2.8 H9.5" fill="#dbe9fa" stroke="#9cc2f0" stroke-width="0.6"/><rect x="2.2" y="2.4" width="5.6" height="9.4" fill="none" stroke="#fff" stroke-width="0.8"/><path d="M3.6 7.2 Q5 4.8 6.4 7.2" fill="none" stroke="#fff" stroke-width="0.9"/><path d="M3 10.2 H7" stroke="#fff" stroke-width="0.8"/></svg>
<div class="t" style="left:522px;top:79.00px;font-size:11.5px;color:#1a1a1a;font-weight:400;letter-spacing:0.05px;">TestCoreML</div>
<svg style="left:589px;top:77px" width="6" height="14" viewBox="0 0 6 14"><path d="M0.5 0.5 L5 7 L0.5 13.5" fill="none" stroke="#a0a0a0" stroke-width="0.9"/></svg>
<svg style="left:597px;top:77px" width="16" height="14" viewBox="0 0 16 14"><path d="M0.5 1.5 Q0.5 0.5 1.5 0.5 H5.5 L7 2 H14.5 Q15.5 2 15.5 3 V12.5 Q15.5 13.5 14.5 13.5 H1.5 Q0.5 13.5 0.5 12.5 Z" fill="#f6c94a" stroke="#d9a628" stroke-width="0.8"/><rect x="1" y="3.5" width="14" height="1" fill="#e8b43a"/></svg>
<div class="t" style="left:617px;top:79.00px;font-size:11.5px;color:#1a1a1a;font-weight:400;letter-spacing:0.05px;">TestCoreML</div>
<svg style="left:683px;top:77px" width="6" height="14" viewBox="0 0 6 14"><path d="M0.5 0.5 L5 7 L0.5 13.5" fill="none" stroke="#a0a0a0" stroke-width="0.9"/></svg>
<svg style="left:692px;top:77px" width="16" height="14" viewBox="0 0 16 14"><path d="M0.5 1.5 Q0.5 0.5 1.5 0.5 H5.5 L7 2 H14.5 Q15.5 2 15.5 3 V12.5 Q15.5 13.5 14.5 13.5 H1.5 Q0.5 13.5 0.5 12.5 Z" fill="#f6c94a" stroke="#d9a628" stroke-width="0.8"/><rect x="1" y="3.5" width="14" height="1" fill="#e8b43a"/></svg>
<div class="t" style="left:712.4px;top:79.00px;font-size:11.5px;color:#1a1a1a;font-weight:400;letter-spacing:-0.1px;">Classes</div>
<svg style="left:756px;top:77px" width="6" height="14" viewBox="0 0 6 14"><path d="M0.5 0.5 L5 7 L0.5 13.5" fill="none" stroke="#a0a0a0" stroke-width="0.9"/></svg>
<svg style="left:767px;top:76px" width="12" height="16" viewBox="0 0 12 16"><path d="M0.5 0.5 H8 L11.5 4 V15.5 H0.5 Z" fill="#fff" stroke="#b0b0b0"/><path d="M8 0.5 V4 H11.5" fill="none" stroke="#b0b0b0"/><text x="1.3" y="13.6" font-family="Liberation Sans" font-weight="700" font-size="9.5" fill="#4c2a9a">m</text></svg>
<div class="t" style="left:785.5px;top:79.00px;font-size:11.5px;color:#1a1a1a;font-weight:400;letter-spacing:0.07px;">MLSleepViewController.mm</div>
<svg style="left:932px;top:77px" width="6" height="14" viewBox="0 0 6 14"><path d="M0.5 0.5 L5 7 L0.5 13.5" fill="none" stroke="#a0a0a0" stroke-width="0.9"/></svg>
<div class="t" style="left:941.5px;top:79.00px;font-size:11.5px;color:#1a1a1a;font-weight:400;letter-spacing:0.1px;">No Selection</div>
<svg style="left:1144px;top:78px" width="8" height="13" viewBox="0 0 8 13"><path d="M7 0.5 L1 6.5 L7 12.5" fill="none" stroke="#555" stroke-width="1.3"/></svg>
<svg style="left:1158.5px;top:78px" width="13" height="12" viewBox="0 0 13 12"><path d="M6.5 0.3 L12.8 11.7 H0.2 Z" fill="#f5a623"/><rect x="5.8" y="3.5" width="1.4" height="4.8" fill="#fff"/><rect x="5.8" y="9.2" width="1.4" height="1.4" fill="#fff"/></svg>
<svg style="left:1178px;top:78px" width="8" height="13" viewBox="0 0 8 13"><path d="M1 0.5 L7 6.5 L1 12.5" fill="none" stroke="#555" stroke-width="1.3"/></svg>
<div class="a" style="left:425px;top:99px;width:769px;height:540px;background:#000"></div>
<div class="a" style="left:425px;top:442px;width:769px;height:72px;background:#233323"></div>
<div class="a" style="left:425px;top:99px;width:769px;height:540px;overflow:hidden">
<div class="ln" style="right:731px;top:7px">326</div>
<div class="code" style="left:55.19999999999999px;top:8px;line-height:1">        <span class="c">NSSortDescriptor</span> *sortDescriptor = [<span class="c">NSSortDescriptor</span></div>
<div class="code" style="left:55.19999999999999px;top:32px;line-height:1">            <span class="c">sortDescriptorWithKey</span>:<span class="s">@&quot;self&quot;</span> <span class="c">ascending</span>:<span class="k">YES</span>];</div>
<div class="ln" style="right:731px;top:55px">327</div>
<div class="ln" style="right:731px;top:79px">328</div>
<div class="code" style="left:55.19999999999999px;top:80px;line-height:1">        [rrFloatArr <span class="c">sortUsingDescriptors</span>:[<span class="c">NSArray</span></div>
<div class="code" style="left:55.19999999999999px;top:104px;line-height:1">            <span class="c">arrayWithObject</span>:sortDescriptor]];</div>
<div class="ln" style="right:731px;top:127px">329</div>
<div class="ln" style="right:731px;top:151px">330</div>
<div class="code" style="left:55.19999999999999px;top:152px;line-height:1">        <span class="c">NSArray</span> *rrSortArr = [rrFloatArr <span class="c">copy</span>];</div>
<div class="ln" style="right:731px;top:175px">331</div>
<div class="ln" style="right:731px;top:199px">332</div>
<div class="code" style="left:55.19999999999999px;top:200px;line-height:1">        <span class="g">// 1. Median</span></div>
<div class="ln" style="right:731px;top:225px">333</div>
<div class="code" style="left:55.19999999999999px;top:226px;line-height:1">        <span class="k">if</span> ([rrSortArr <span class="c">count</span>] % <span class="n">2</span> == <span class="n">1</span>) {<span class="g">// </span></div>
<div class="ln" style="right:731px;top:251px">334</div>
<div class="code" style="left:55.19999999999999px;top:252px;line-height:1">            median = [rrSortArr[[rrSortArr <span class="c">count</span>]/<span class="n">2</span>]</div>
<div class="code" style="left:55.19999999999999px;top:276px;line-height:1">                <span class="c">floatValue</span>];</div>
<div class="ln" style="right:731px;top:299px">335</div>
<div class="code" style="left:55.19999999999999px;top:300px;line-height:1">        }</div>
<div class="ln" style="right:731px;top:323px">336</div>
<div class="code" style="left:55.19999999999999px;top:324px;line-height:1">        <span class="k">else</span> {</div>
<div class="ln" style="right:731px;top:347px">337</div>
<div class="code" style="left:55.19999999999999px;top:348px;line-height:1">            median = ([rrSortArr[[rrSortArr <span class="c">count</span>]/<span class="n">2</span>]</div>
<div class="code" style="left:55.19999999999999px;top:372px;line-height:1">                <span class="c">floatValue</span>] + [rrSortArr[[rrSortArr</div>
<div class="code" style="left:55.19999999999999px;top:396px;line-height:1">                <span class="c">count</span>]/<span class="n">2</span>-<span class="n">1</span>] <span class="c">floatValue</span>])/<span class="n">2</span>;</div>
<div class="ln" style="right:731px;top:419px">338</div>
<div class="code" style="left:55.19999999999999px;top:420px;line-height:1">        }</div>
<div class="ln" style="right:731px;top:443px">339</div>
<div class="ln" style="right:731px;top:467px">340</div>
<div class="code" style="left:55.19999999999999px;top:468px;line-height:1">        <span class="g">// 2. Inter-Quartile-Range (IQR)</span></div>
<div class="ln" style="right:731px;top:491px">341</div>
<div class="code" style="left:55.19999999999999px;top:492px;line-height:1">        <span class="g">// Make a C-array</span></div>
<div class="ln" style="right:731px;top:515px">342</div>
<div class="code" style="left:55.19999999999999px;top:516px;line-height:1">        <span class="k">int</span> count = (<span class="k">int</span>)[rrFloatArr <span class="c">count</span>];</div>
<div class="ln" style="right:731px;top:539px">343</div>
<div class="code" style="left:55.19999999999999px;top:540px;line-height:1">        <span class="k">float</span> *floatArr = (<span class="k">float</span> *)<span class="c">malloc</span>(<span class="k">sizeof</span>(<span class="k">float</span>) * count);</div>
</div>
<svg style="left:969px;top:323px" width="54" height="18" viewBox="0 0 54 18"><g stroke="#43cf47" stroke-width="1.7" fill="none" stroke-linecap="square"><path d="M1.5 4 H14.5 M8 0.8 V4 Q7 7 2 8.5 M8 4 Q9 7 14 8.5 M1 10 H15 M12 10 V16.5 L10 16 M3 12 H9 V15 H3 Z"/><path d="M19 2.5 H26 M22.5 0.8 V9 M19.5 4.5 H25.5 V8 H19.5 Z M19 10.5 H26 M21.5 10.5 L19.5 16.5 H26 M24.5 12.5 L20 17 M28.5 0.8 L27.2 6 M27.5 4 H33 M31.8 4 Q31 12 26.8 17 M28.5 8 Q30 13 33.5 17"/><path d="M39.5 0.8 L36.5 7 M38.5 4.5 V17 M41.5 1.5 H52.5 V17 M41.5 1.5 V17 M43.5 4.5 H50.5 M47 2.5 V8.5 M44.2 8.5 H49.8 V13.5 H44.2 Z M41.5 16.5 H52.5"/></g></svg>
<div class="a" style="left:841px;top:516px;width:325px;height:40px;background:#465e3e;border-radius:3px"></div>
<div class="a" style="left:850px;top:534px;width:12px;height:1.3px;background:#b8c4b2"></div>
<div class="a" style="left:850px;top:537.3px;width:12px;height:1.3px;background:#b8c4b2"></div>
<div class="t" style="left:870.4px;top:529.00px;font-size:17.3px;color:#e9eee6;font-weight:400;letter-spacing:0px;">Thread 1: breakpoint 1.1</div>
<svg style="left:1139px;top:525px" width="21" height="21" viewBox="0 0 21 21"><circle cx="10.5" cy="10.5" r="10.3" fill="#314a2c"/><path d="M6 6 L15 15 M15 6 L6 15" stroke="#fff" stroke-width="1.7"/></svg>
<div class="a" style="left:425px;top:639px;width:769px;height:29px;background:#e9e9e9"></div>
<div class="a" style="left:425px;top:639px;width:769px;height:1px;background:#c9c9c9"></div>
<div class="a" style="left:425px;top:668px;width:769px;height:1px;background:#b9b9b9"></div>
<svg style="left:434px;top:648px" width="15" height="12" viewBox="0 0 15 12"><rect x="0.5" y="0.5" width="14" height="11" fill="none" stroke="#6a6a6a"/><path d="M3.8 3.8 H11.2 L7.5 8 Z" fill="none" stroke="#6a6a6a" stroke-width="1"/></svg>
<svg style="left:466px;top:650px" width="15" height="10" viewBox="0 0 15 10"><path d="M0 0 H10.5 L15 5 L10.5 10 H0 Z" fill="#1a73e8"/></svg>
<svg style="left:498px;top:648px" width="16" height="13" viewBox="0 0 16 13"><rect x="0.5" y="0.5" width="3" height="12" fill="none" stroke="#6a6a6a"/><path d="M6.5 0.8 L15 6.5 L6.5 12.2 Z" fill="none" stroke="#6a6a6a"/></svg>
<svg style="left:531px;top:648px" width="15" height="14" viewBox="0 0 15 14"><path d="M1 7 L7 1.5 L12.5 6.5 M12.5 3 V6.8 H9" fill="none" stroke="#6a6a6a" stroke-width="1.1"/><rect x="3.5" y="10" width="8" height="3" fill="none" stroke="#6a6a6a"/></svg>
<svg style="left:565px;top:647px" width="12" height="15" viewBox="0 0 12 15"><path d="M6 0 V8 M2.5 5 L6 8.5 L9.5 5" fill="none" stroke="#6a6a6a" stroke-width="1.1"/><rect x="1.5" y="10.5" width="9" height="3" fill="none" stroke="#6a6a6a"/></svg>
<svg style="left:596px;top:647px" width="12" height="15" viewBox="0 0 12 15"><path d="M6 9 V1 M2.5 4 L6 0.5 L9.5 4" fill="none" stroke="#6a6a6a" stroke-width="1.1"/><rect x="1.5" y="10.5" width="9" height="3" fill="none" stroke="#6a6a6a"/></svg>
<div class="a" style="left:616px;top:646px;width:1px;height:15px;background:#b5b5b5"></div>
<svg style="left:627px;top:647px" width="13" height="14" viewBox="0 0 13 14"><rect x="3" y="0.5" width="7" height="13" rx="1.5" fill="none" stroke="#6a6a6a"/><path d="M0.5 2.5 V11.5 M12.5 2.5 V11.5" stroke="#6a6a6a"/></svg>
<svg style="left:657px;top:646px" width="16" height="16" viewBox="0 0 16 16"><circle cx="3.5" cy="3.5" r="2.6" fill="none" stroke="#6a6a6a"/><circle cx="3.5" cy="12.5" r="2.6" fill="none" stroke="#6a6a6a"/><circle cx="12.5" cy="8" r="2.6" fill="none" stroke="#6a6a6a"/><path d="M6 4.5 L10 7 M6 11.5 L10 9" stroke="#6a6a6a"/></svg>
<svg style="left:688px;top:647px" width="15" height="14" viewBox="0 0 15 14"><path d="M14.5 0.5 L0.5 6.5 L7 7.5 L8 13.5 Z" fill="none" stroke="#6a6a6a" stroke-linejoin="round"/></svg>
<div class="a" style="left:712px;top:646px;width:1px;height:15px;background:#b5b5b5"></div>
<svg style="left:720px;top:646px" width="16" height="16" viewBox="0 0 16 16"><rect x="0.5" y="0.5" width="15" height="15" rx="3.2" fill="#fcfcfc" stroke="#9a9a9a"/><path d="M5.5 0.5 V15.5 M10.5 0.5 V15.5 M0.5 5.5 H15.5 M0.5 10.5 H15.5 M1.5 1.5 L5.5 5.5 M14.5 1.5 L10.5 5.5 M1.5 14.5 L5.5 10.5 M14.5 14.5 L10.5 10.5" stroke="#9a9a9a" stroke-width="0.9"/><circle cx="8" cy="8" r="4.6" fill="none" stroke="#a8a8a8" stroke-width="0.7"/><circle cx="8" cy="8" r="2.2" fill="#fcfcfc" stroke="#9a9a9a" stroke-width="0.9"/><circle cx="8" cy="8" r="0.9" fill="#9a9a9a"/></svg>
<div class="t" style="left:741px;top:649.00px;font-size:11.5px;color:#1a1a1a;font-weight:400;letter-spacing:0.1px;">Test<span style="letter-spacing:-0.4px">...</span>ML</div>
<svg style="left:795px;top:647px" width="6" height="14" viewBox="0 0 6 14"><path d="M0.5 0.5 L5 7 L0.5 13.5" fill="none" stroke="#a0a0a0" stroke-width="0.9"/></svg>
<svg style="left:803px;top:646px" width="15" height="15" viewBox="0 0 15 15"><circle cx="7.5" cy="7.5" r="7.2" fill="#4f84d6"/><circle cx="7.5" cy="7.5" r="5.9" fill="#7ba4e0"/><path d="M5.5 3.6 V12 M7.5 2.6 V12.6 M9.5 3.6 V12" stroke="#fff" stroke-width="1"/></svg>
<div class="t" style="left:823px;top:649.00px;font-size:11.5px;color:#1a1a1a;font-weight:400;letter-spacing:0.2px;">Thread 1</div>
<svg style="left:873px;top:647px" width="6" height="14" viewBox="0 0 6 14"><path d="M0.5 0.5 L5 7 L0.5 13.5" fill="none" stroke="#a0a0a0" stroke-width="0.9"/></svg>
<svg style="left:880px;top:646px" width="15" height="15" viewBox="0 0 15 15"><rect x="0" y="0" width="15" height="15" fill="#6a98d8"/><rect x="0.5" y="0.5" width="14" height="14" fill="none" stroke="#3f76c4"/><circle cx="7.5" cy="5.3" r="2.8" fill="#fff"/><path d="M2 14 Q2 9.3 7.5 9.3 Q13 9.3 13 14 Z" fill="#fff"/></svg>
<div class="t" style="left:903px;top:649.00px;font-size:11.5px;color:#1a1a1a;font-weight:400;letter-spacing:0.22px;">2 ::-[MLSleepViewController computeForLongInput]()</div>
<div class="a" style="left:425px;top:669px;width:352px;height:216px;background:#fff"></div>
<svg style="left:434px;top:673px" width="7" height="9" viewBox="0 0 7 9"><path d="M0.5 0 L6.5 4.5 L0.5 9 Z" fill="#7a7a7a"/></svg>
<svg style="left:446px;top:671px" width="14" height="14" viewBox="0 0 14 14"><rect x="0.5" y="0.5" width="13" height="13" rx="1.5" fill="#ae9ddc" stroke="#8f7bc9"/><text x="7" y="11.4" text-anchor="middle" font-family="Liberation Sans" font-size="12" fill="#fff">A</text></svg>
<div class="t" style="left:464.5px;top:673px;font-size:11.5px;color:#1a1a1a;letter-spacing:0.15px"><b>self</b><span style="color:#777"> = </span><span style="color:#8a8a8a;font-size:10.8px">(MLSleepViewController *)</span><span> 0x14fd13a30</span></div>
<svg style="left:434px;top:691px" width="7" height="9" viewBox="0 0 7 9"><path d="M0.5 0 L6.5 4.5 L0.5 9 Z" fill="#7a7a7a"/></svg>
<svg style="left:446px;top:689px" width="14" height="14" viewBox="0 0 14 14"><rect x="0.5" y="0.5" width="13" height="13" rx="1.5" fill="#88c28d" stroke="#5f9f65"/><text x="7" y="11.4" text-anchor="middle" font-family="Liberation Sans" font-size="12" fill="#fff">L</text></svg>
<div class="t" style="left:464.5px;top:691px;font-size:11.5px;color:#1a1a1a;letter-spacing:0.15px"><b>rrSortArr</b><span style="color:#777"> = </span><span style="color:#8a8a8a;font-size:10.8px">(__NSArray0 *)</span><span> 0 elements</span></div>
<svg style="left:434px;top:709px" width="7" height="9" viewBox="0 0 7 9"><path d="M0.5 0 L6.5 4.5 L0.5 9 Z" fill="#7a7a7a"/></svg>
<svg style="left:446px;top:707px" width="14" height="14" viewBox="0 0 14 14"><rect x="0.5" y="0.5" width="13" height="13" rx="1.5" fill="#88c28d" stroke="#5f9f65"/><text x="7" y="11.4" text-anchor="middle" font-family="Liberation Sans" font-size="12" fill="#fff">L</text></svg>
<div class="t" style="left:464.5px;top:709px;font-size:11.5px;color:#1a1a1a;letter-spacing:0.15px"><b>rrFloatArr</b><span style="color:#777"> = </span><span style="color:#8a8a8a;font-size:10.8px">(__NSArrayM *)</span><span> 0 elements</span></div>
<svg style="left:446px;top:725px" width="14" height="14" viewBox="0 0 14 14"><rect x="0.5" y="0.5" width="13" height="13" rx="1.5" fill="#88c28d" stroke="#5f9f65"/><text x="7" y="11.4" text-anchor="middle" font-family="Liberation Sans" font-size="12" fill="#fff">L</text></svg>
<div class="t" style="left:464.5px;top:727px;font-size:11.5px;color:#1a1a1a;letter-spacing:0.15px"><b>median</b><span style="color:#777"> = </span><span style="color:#8a8a8a;font-size:10.8px">(float)</span><span> 0</span></div>
<div class="t" style="left:444px;top:745px;font-size:11.5px;color:#1a1a1a"><b>count</b><span style="color:#777"> = </span><span style="color:#8a8a8a;font-size:10.8px">(int)</span><span> 17</span></div>
<div class="a" style="left:777px;top:669px;width:417px;height:216px;background:#000"></div>
<div class="a" style="left:778px;top:669px;width:416px;height:216px;overflow:hidden">
<div class="con" style="left:3.5px;top:2px">median: 920.000000, iqr: 118.000000, mad: 61.660770</div>
<div class="con" style="left:3.5px;top:15px">2018-04-17 15:35:21.895703+0800 TestCoreML[55820:9714916]</div>
<div class="con" style="left:3.5px;top:28px">median: 844.000000, iqr: 216.000000, mad: 100.429070</div>
<div class="con" style="left:3.5px;top:41px">2018-04-17 15:35:21.895773+0800 TestCoreML[55820:9714916]</div>
<div class="con" style="left:3.5px;top:54px">median: 882.000000, iqr: 78.000000, mad: 52.062263</div>
<div class="con" style="left:3.5px;top:67px">2018-04-17 15:35:21.895883+0800 TestCoreML[55820:9714916]</div>
<div class="con" style="left:3.5px;top:80px">median: 912.000000, iqr: 53.000000, mad: 32.054688</div>
<div class="con" style="left:3.5px;top:93px">2018-04-17 15:35:21.896004+0800 TestCoreML[55820:9714916]</div>
<div class="con" style="left:3.5px;top:106px">median: 948.000000, iqr: 48.000000, mad: 29.927162</div>
<div class="con" style="left:3.5px;top:119px">2018-04-17 15:35:21.896076+0800 TestCoreML[55820:9714916]</div>
<div class="con" style="left:3.5px;top:132px">median: 876.000000, iqr: 60.000000, mad: 45.112942</div>
<div class="con" style="left:3.5px;top:145px">2018-04-17 15:35:21.896185+0800 TestCoreML[55820:9714916]</div>
<div class="con" style="left:3.5px;top:158px">median: 942.000000, iqr: 51.000000, mad: 29.733334</div>
<div class="con" style="left:3.5px;top:171px">2018-04-17 15:35:21.896303+0800 TestCoreML[55820:9714916]</div>
<div class="con" style="left:3.5px;top:184px">median: 964.000000, iqr: 68.000000, mad: 41.689911</div>
<div class="con" style="left:3.5px;top:197px">2018-04-17 15:35:21.896375+0800 TestCoreML[55820:9714916]</div>
<div class="con" style="left:3.5px;top:210px">median: 850.000000, iqr: 39.000000, mad: 25.176470</div>
</div>
<div class="a" style="left:425px;top:885px;width:769px;height:29px;background:#fff"></div>
<div class="a" style="left:776px;top:669px;width:1px;height:245px;background:#c2c2c2"></div>
<div class="t" style="left:435.2px;top:895.00px;font-size:11.5px;color:#1a1a1a;font-weight:400;letter-spacing:0.1px;">Auto</div>
<svg style="left:462px;top:894px" width="8" height="11" viewBox="0 0 8 11"><path d="M0.8 4 L4 0.8 L7.2 4 M0.8 7 L4 10.2 L7.2 7" fill="none" stroke="#333" stroke-width="1.2"/></svg>
<div class="a" style="left:477px;top:893px;width:1px;height:13px;background:#c5c5c5"></div>
<svg style="left:484px;top:895px" width="15" height="10" viewBox="0 0 15 10"><path d="M0.5 5 Q7.5 -3 14.5 5 Q7.5 13 0.5 5 Z" fill="none" stroke="#bdbdbd"/><circle cx="7.5" cy="5" r="2.3" fill="none" stroke="#bdbdbd"/></svg>
<svg style="left:505px;top:893px" width="14" height="14" viewBox="0 0 14 14"><circle cx="7" cy="7" r="6.3" fill="none" stroke="#bdbdbd"/><path d="M7 6 V10.5" stroke="#bdbdbd" stroke-width="1.2"/><circle cx="7" cy="4" r="0.8" fill="#bdbdbd"/></svg>
<div class="a" style="left:598px;top:889px;width:173px;height:22px;background:#f0f0f0;border:1px solid #d2d2d2;border-radius:4px"></div>
<svg style="left:602px;top:894px" width="14" height="14" viewBox="0 0 14 14"><circle cx="7" cy="7" r="6.3" fill="none" stroke="#8a8a8a" stroke-width="1.2"/><path d="M3.5 5 H10.5 M4.8 7.2 H9.2 M6 9.4 H8" stroke="#8a8a8a" stroke-width="1.1"/></svg>
<div class="t" style="left:619.8px;top:895.00px;font-size:11.5px;color:#b4b4b4;font-weight:400;letter-spacing:0.2px;">Filter</div>
<div class="t" style="left:787.6px;top:895.00px;font-size:11.5px;color:#1a1a1a;font-weight:400;letter-spacing:0.1px;">All Output</div>
<svg style="left:843px;top:894px" width="8" height="11" viewBox="0 0 8 11"><path d="M0.8 4 L4 0.8 L7.2 4 M0.8 7 L4 10.2 L7.2 7" fill="none" stroke="#333" stroke-width="1.2"/></svg>
<div class="a" style="left:941px;top:889px;width:172px;height:22px;background:#f0f0f0;border:1px solid #d2d2d2;border-radius:4px"></div>
<svg style="left:945px;top:894px" width="14" height="14" viewBox="0 0 14 14"><circle cx="7" cy="7" r="6.3" fill="none" stroke="#8a8a8a" stroke-width="1.2"/><path d="M3.5 5 H10.5 M4.8 7.2 H9.2 M6 9.4 H8" stroke="#8a8a8a" stroke-width="1.1"/></svg>
<div class="t" style="left:963px;top:895.00px;font-size:11.5px;color:#b4b4b4;font-weight:400;letter-spacing:0.2px;">Filter</div>
<svg style="left:1129px;top:892px" width="13" height="15" viewBox="0 0 13 15"><path d="M0.5 2.5 H12.5 M4.5 2.5 V0.5 H8.5 V2.5 M1.8 3 L2.8 14.5 H10.2 L11.2 3 M4.8 5 V12.5 M6.5 5 V12.5 M8.2 5 V12.5" fill="none" stroke="#7a7a7a" stroke-width="1"/></svg>
<div class="a" style="left:1149px;top:893px;width:1px;height:14px;background:#c5c5c5"></div>
<svg style="left:1155px;top:892px" width="15" height="15" viewBox="0 0 15 15"><rect x="0.75" y="0.75" width="13.5" height="13.5" fill="none" stroke="#1a73e8" stroke-width="1.5"/><rect x="3" y="3" width="2" height="9" fill="#1a73e8"/></svg>
<svg style="left:1173px;top:892px" width="15" height="15" viewBox="0 0 15 15"><rect x="0.75" y="0.75" width="13.5" height="13.5" fill="none" stroke="#1a73e8" stroke-width="1.5"/><rect x="10" y="3" width="2" height="9" fill="#1a73e8"/></svg>
</div>
</body></html>
